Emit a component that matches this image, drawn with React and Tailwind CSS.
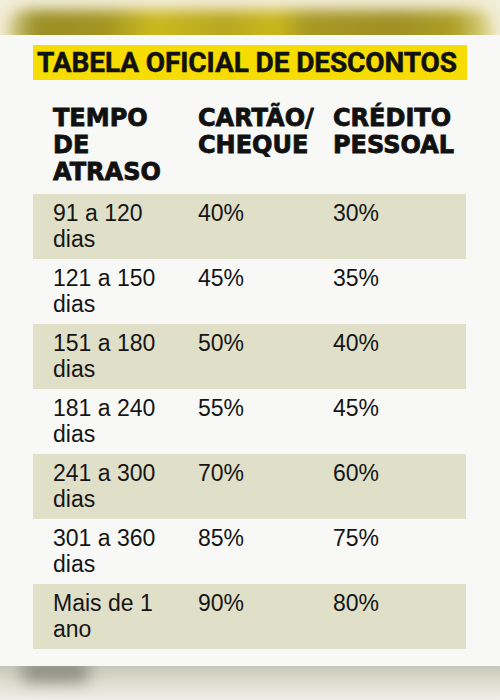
const rows = [
  { tempo: ['91 a 120', 'dias'], cartao: '40%', credito: '30%' },
  { tempo: ['121 a 150', 'dias'], cartao: '45%', credito: '35%' },
  { tempo: ['151 a 180', 'dias'], cartao: '50%', credito: '40%' },
  { tempo: ['181 a 240', 'dias'], cartao: '55%', credito: '45%' },
  { tempo: ['241 a 300', 'dias'], cartao: '70%', credito: '60%' },
  { tempo: ['301 a 360', 'dias'], cartao: '85%', credito: '75%' },
  { tempo: ['Mais de 1', 'ano'], cartao: '90%', credito: '80%' },
]

const heavy = { fontFamily: '"DejaVu Sans", sans-serif' }
const body = { fontFamily: '"Liberation Sans", Arial, sans-serif' }

export default function App() {
  return (
    <div className="w-[500px] h-[700px] overflow-hidden bg-[#f8f8f6] flex flex-col">
      {/* blurred strip from the photo above */}
      <div className="h-[35px] shrink-0 overflow-hidden bg-[#f3eed9]">
        <div className="mt-[10px] mx-[8px] h-[40px] rounded-[16px] blur-[7px] bg-[linear-gradient(90deg,#d8d090_0%,#9a8e24_6%,#a39422_20%,#cbb91e_30%,#b8a720_45%,#cbb81c_55%,#a89824_62%,#a09024_80%,#ac9e26_92%,#e0d990_100%)]" />
      </div>

      <div className="px-[33px] pt-[10px] flex flex-col">
        {/* title */}
        <div className="h-[35px] w-[434px] bg-[#f6dc00] pl-[4px] flex items-center">
          <span
            className="text-[28px] font-bold tracking-[-0.1px] leading-none text-[#111] mt-[1px] [-webkit-text-stroke:0.5px_#111]"
            style={{ fontFamily: 'Roboto, sans-serif' }}
          >
            TABELA OFICIAL DE DESCONTOS
          </span>
        </div>

        {/* header */}
        <div
          className="mt-[25px] mb-[8px] pl-[20px] grid grid-cols-[145px_135px_1fr] text-[24px] leading-[27px] font-bold text-[#111] [-webkit-text-stroke:0.8px_#111]"
          style={heavy}
        >
          <div>TEMPO<br />DE<br />ATRASO</div>
          <div>CARTÃO/<br />CHEQUE</div>
          <div>CRÉDITO<br />PESSOAL</div>
        </div>

        {/* rows */}
        <div className="w-[433px] flex flex-col" style={body}>
          {rows.map((r, i) => (
            <div
              key={i}
              className={`h-[65px] pl-[20px] pt-[6px] grid grid-cols-[145px_135px_1fr] text-[23px] leading-[26px] text-[#151515] ${
                i % 2 === 0 ? 'bg-[#e0dfc8]' : ''
              }`}
            >
              <div>{r.tempo[0]}<br />{r.tempo[1]}</div>
              <div>{r.cartao}</div>
              <div>{r.credito}</div>
            </div>
          ))}
        </div>
      </div>

      {/* shadow of the page edge below */}
      <div className="mt-[17px] flex-1 bg-[linear-gradient(180deg,#c8c8b8_0%,#dcdccf_45%,#efefe9_100%)] overflow-hidden">
        <div className="ml-[20px] mt-[-6px] w-[70px] h-[22px] rounded-full bg-[#8e8e80] blur-[8px]" />
      </div>
    </div>
  )
}
